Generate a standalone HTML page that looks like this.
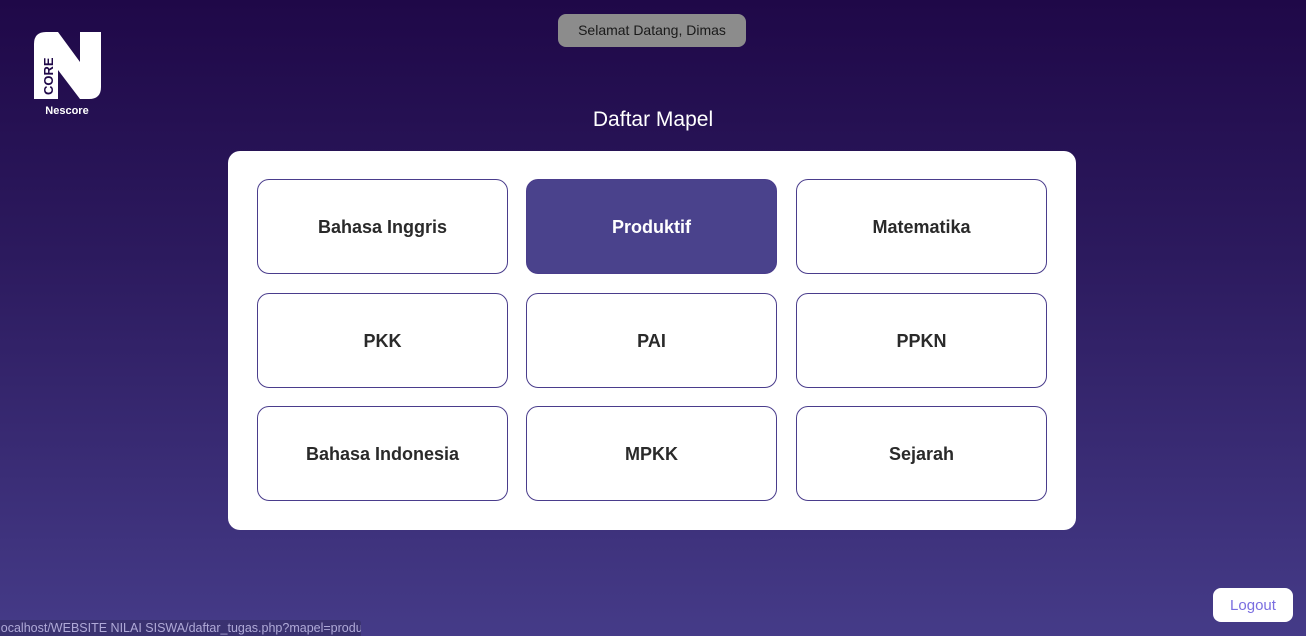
<!DOCTYPE html>
<html><head><style>
*{margin:0;padding:0;box-sizing:border-box}
html,body{width:1306px;height:636px;overflow:hidden}
body{background:linear-gradient(180deg,#1f0848 0%,#2c1a5e 40%,#453b88 100%);font-family:"Liberation Sans",sans-serif;position:relative}
.greet{position:absolute;left:558px;top:14px;width:188px;height:33px;background:#8c8c8c;border-radius:8px;color:#1a1a1a;font-size:14px;text-align:center;line-height:33px}
h1{position:absolute;top:108px;left:0;width:1306px;text-align:center;color:#fff;font-weight:normal;font-size:21px}
.card{position:absolute;left:228px;top:151px;width:848px;height:379px;background:#fff;border-radius:12px}
.b{position:absolute;width:251px;height:95px;border:1px solid #4a3d8c;border-radius:12px;display:flex;align-items:center;justify-content:center;font-weight:bold;font-size:18px;color:#2a2a2a;padding-top:2px}
.b.a{background:#4a428c;color:#fff}
.logout{position:absolute;left:1213px;top:588px;width:80px;height:34px;background:#fff;border-radius:8px;color:#7a6ee0;font-size:15px;text-align:center;line-height:35px}
.status{position:absolute;left:0;top:620px;height:16px;width:361px;background:#3a3270;color:#b0aad8;font-size:12.5px;line-height:17px;padding-left:0;white-space:nowrap;overflow:hidden;border-top-right-radius:3px;text-indent:-2px}
</style></head><body>
<svg style="position:absolute;left:30px;top:28px" width="80" height="92" viewBox="30 28 80 92">
<path d="M34,44 Q34,32 46,32 L58,32 L80,62 L80,32 L101,32 L101,87 Q101,99 89,99 L80,99 L58,70 L58,99 L34,99 Z" fill="#fff"/>
<text x="0" y="0" transform="translate(53,95) rotate(-90)" font-family="Liberation Sans" font-weight="bold" font-size="13" fill="#1f0848">CORE</text>
<text x="67" y="114" text-anchor="middle" font-family="Liberation Sans" font-weight="bold" font-size="11" fill="#fff">Nescore</text>
</svg>
<div class="greet">Selamat Datang, Dimas</div>
<h1>Daftar Mapel</h1>
<div class="card">
<div class="b" style="left:29px;top:28px">Bahasa Inggris</div>
<div class="b a" style="left:298px;top:28px">Produktif</div>
<div class="b" style="left:568px;top:28px">Matematika</div>
<div class="b" style="left:29px;top:142px">PKK</div>
<div class="b" style="left:298px;top:142px">PAI</div>
<div class="b" style="left:568px;top:142px">PPKN</div>
<div class="b" style="left:29px;top:255px">Bahasa Indonesia</div>
<div class="b" style="left:298px;top:255px">MPKK</div>
<div class="b" style="left:568px;top:255px">Sejarah</div>
</div>
<div class="logout">Logout</div>
<div class="status">localhost/WEBSITE NILAI SISWA/daftar_tugas.php?mapel=produktif</div>
</body></html>
